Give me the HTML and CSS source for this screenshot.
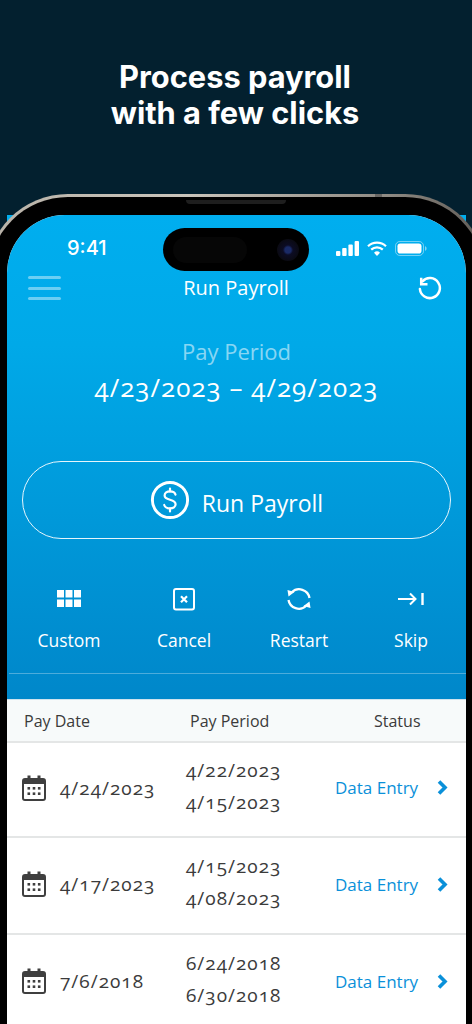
FILE: index.html
```html
<!DOCTYPE html>
<html lang="en">
<head>
<meta charset="utf-8">
<title>Run Payroll</title>
<link rel="stylesheet" href="styles.css">
</head>
<body>
<header class="hero">
  <h1>Process payroll<br>with a few clicks</h1>
</header>
<div class="phone">
  <span class="corner-bleed"></span>
  <div class="metal">
    <span class="band"></span>
    <div class="bezel">
      <span class="speaker"></span>
      <main class="screen">
        <div class="island"><span class="island-blob"></span><span class="lens"></span></div>
        <section class="top">
          <div class="status">
            <span class="time">9:41</span>
            <span class="status-icons">
              <svg width="23" height="15" viewBox="0 0 23 15"><g fill="#fff"><rect x="0" y="10" width="4.4" height="5" rx="1"/><rect x="6.2" y="7" width="4.4" height="8" rx="1"/><rect x="12.4" y="3.5" width="4.4" height="11.5" rx="1"/><rect x="18.6" y="0" width="4.4" height="15" rx="1"/></g></svg>
              <svg width="20" height="15" viewBox="0 0 20 15"><g fill="none" stroke="#fff" stroke-width="2.2"><path d="M1 5.2a13 13 0 0 1 18 0"/><path d="M4.2 8.6a8.4 8.4 0 0 1 11.6 0"/></g><path d="M10 15l-3-3.3a4.3 4.3 0 0 1 6 0z" fill="#fff"/></svg>
              <svg width="32" height="15" viewBox="0 0 32 15"><rect x=".5" y=".5" width="28" height="14" rx="4.4" fill="none" stroke="#fff" stroke-opacity=".45"/><rect x="2.5" y="2.5" width="24" height="10" rx="2.8" fill="#fff"/><path d="M30 5.2c1 .3 1.6 1.2 1.6 2.3S31 9.500 30 9.800z" fill="#fff" fill-opacity=".5"/></svg>
            </span>
          </div>
          <nav class="navbar">
            <span class="burger"><i></i><i></i><i></i></span>
            <span class="nav-title">Run Payroll</span>
            <svg class="reset" width="25" height="24" viewBox="0 0 25 24" fill="none" stroke="#fff" stroke-width="2.5"><path d="M5.500 5.300A10 10 0 1 1 2.900 13" stroke-linecap="round"/><path d="M4.200 1.800v6.500h6.300"/></svg>
          </nav>
          <div class="period">
            <div class="period-label">Pay Period</div>
            <div class="period-dates">4/23/2023 – 4/29/2023</div>
          </div>
          <button class="run">
            <svg width="40" height="40" viewBox="0 0 40 40" fill="none" stroke="#fff"><circle cx="20" cy="20" r="17.600" stroke-width="3"/><path d="M25.500 14.600c-.6-2-2.800-3.200-5.500-3.200-3 0-5.400 1.600-5.400 4.100 0 5.600 11 2.900 11 8.800 0 2.500-2.400 4.100-5.600 4.100-2.900 0-5.100-1.300-5.800-3.400" stroke-width="2.200" stroke-linecap="round"/><path d="M20 8.500v3M20 28.500v3" stroke-width="2.200" stroke-linecap="round"/></svg>
            <span>Run Payroll</span>
          </button>
          <div class="actions">
            <div class="action">
              <svg width="26" height="26" viewBox="0 0 26 26" fill="#fff"><rect x="1" y="4" width="7" height="7.500"/><rect x="9.500" y="4" width="7" height="7.500"/><rect x="18" y="4" width="7" height="7.500"/><rect x="1" y="13.500" width="7" height="7.500"/><rect x="9.500" y="13.500" width="7" height="7.500"/><rect x="18" y="13.500" width="7" height="7.500"/></svg>
              <span>Custom</span>
            </div>
            <div class="action">
              <svg width="26" height="26" viewBox="0 0 26 26" fill="none" stroke="#fff"><rect x="3" y="3" width="20" height="20.500" rx="2" stroke-width="2"/><path d="M10 10.200l6 6M16 10.200l-6 6" stroke-width="2.200"/></svg>
              <span>Cancel</span>
            </div>
            <div class="action">
              <svg width="26" height="26" viewBox="0 0 26 26" fill="none" stroke="#fff" stroke-width="2.300"><path d="M5.800 6.300A10.500 10.500 0 0 1 23.500 12"/><path d="M20.200 19.700A10.500 10.500 0 0 1 2.500 14"/><path d="M1.500 4l7 2-6 4.500z" fill="#fff" stroke="none"/><path d="M24.500 22l-7-2 6-4.500z" fill="#fff" stroke="none"/></svg>
              <span>Restart</span>
            </div>
            <div class="action">
              <svg width="26" height="26" viewBox="0 0 26 26" fill="none" stroke="#fff" stroke-width="2"><path d="M0 13h17M12 7.500l5.500 5.500-5.500 5.500"/><path d="M24.500 7v12" stroke-width="2.400"/></svg>
              <span>Skip</span>
            </div>
          </div>
          <hr class="divider">
        </section>
        <section class="table">
          <div class="thead">
            <span>Pay Date</span><span>Pay Period</span><span>Status</span>
          </div>
          <div class="row">
            <div class="date"><svg class="cal" width="24" height="26" viewBox="0 0 24 26"><use href="#cal"/></svg><span>4/24/2023</span></div>
            <div class="dates"><span>4/22/2023</span><span>4/15/2023</span></div>
            <div class="state"><span>Data Entry</span><svg width="11" height="15" viewBox="0 0 11 15" fill="none" stroke="#0a90d9" stroke-width="3.600"><path d="M2 1.500l6 6-6 6"/></svg></div>
          </div>
          <div class="row">
            <div class="date"><svg class="cal" width="24" height="26" viewBox="0 0 24 26"><use href="#cal"/></svg><span>4/17/2023</span></div>
            <div class="dates"><span>4/15/2023</span><span>4/08/2023</span></div>
            <div class="state"><span>Data Entry</span><svg width="11" height="15" viewBox="0 0 11 15" fill="none" stroke="#0a90d9" stroke-width="3.600"><path d="M2 1.500l6 6-6 6"/></svg></div>
          </div>
          <div class="row">
            <div class="date"><svg class="cal" width="24" height="26" viewBox="0 0 24 26"><use href="#cal"/></svg><span>7/6/2018</span></div>
            <div class="dates"><span>6/24/2018</span><span>6/30/2018</span></div>
            <div class="state"><span>Data Entry</span><svg width="11" height="15" viewBox="0 0 11 15" fill="none" stroke="#0a90d9" stroke-width="3.600"><path d="M2 1.500l6 6-6 6"/></svg></div>
          </div>
        </section>
      </main>
    </div>
  </div>
</div>
<svg class="defs" width="0" height="0">
  <symbol id="cal" viewBox="0 0 24 26">
    <path fill="#3f3f3f" fill-rule="evenodd" d="M3 3h2.500V.5h3V3h7V.5h3V3H21a3 3 0 0 1 3 3v17a3 3 0 0 1-3 3H3a3 3 0 0 1-3-3V6a3 3 0 0 1 3-3zM2 9v14c0 .6.400 1 1 1h18c.6 0 1-.4 1-1V9z"/>
    <g fill="#3f3f3f"><rect x="5.500" y="12" width="2.600" height="2.600"/><rect x="10.700" y="12" width="2.600" height="2.600"/><rect x="15.900" y="12" width="2.600" height="2.600"/><rect x="5.500" y="17.400" width="2.600" height="2.600"/><rect x="10.700" y="17.400" width="2.600" height="2.600"/><rect x="15.900" y="17.400" width="2.600" height="2.600"/></g>
  </symbol>
</svg>
</body>
</html>
```
FILE: styles.css
```css
* { box-sizing: border-box; }
html, body { margin: 0; padding: 0; }
body {
  width: 472px;
  height: 1024px;
  overflow: hidden;
  background: #03202f;
  font-family: "Open Sans", "Liberation Sans", sans-serif;
}
.defs { position: absolute; }
.hero {
  height: 194px;
  padding: 59px 2px 0 0;
  text-align: center;
}
.hero h1 {
  margin: 0;
  color: #fff;
  font: 700 30.800px/36px Inter, "Liberation Sans", sans-serif;
}
.phone {
  position: relative;
  width: 501px;
  margin-left: -14px;
}
.corner-bleed {
  position: absolute;
  z-index: -1;
  left: 21px;
  right: 21px;
  top: 21px;
  height: 8px;
  background: #00aeef;
}
.metal {
  position: relative;
  padding: 3px 3px 0;
  border-radius: 82px 82px 0 0;
  background: linear-gradient(90deg, #b8b2a8 0, #c9c4bb 40%, #8f8a83 80%, #5d5954 100%);
}
.band {
  position: absolute;
  left: 389px;
  top: 0;
  width: 7px;
  height: 3px;
  background: #6a6764;
}
.bezel {
  position: relative;
  padding: 18px 18px 0;
  border-radius: 79px 79px 0 0;
  background: #000;
}
.speaker {
  position: absolute;
  left: 197px;
  top: 3px;
  width: 100px;
  height: 4px;
  border-radius: 0 0 4px 4px;
  background: #1e1e1e;
}
.screen {
  position: relative;
  height: 820px;
  overflow: hidden;
  border-radius: 58px 58px 0 0;
  background: #fff;
}
.island {
  position: absolute;
  left: 156px;
  top: 13px;
  width: 146px;
  height: 43px;
  border-radius: 22px;
  background: #000;
  display: flex;
  align-items: center;
  justify-content: space-between;
  padding: 0 10px;
}
.island-blob { width: 74px; height: 26px; border-radius: 13px; background: #060606; }
.lens {
  width: 22px;
  height: 22px;
  border-radius: 50%;
  background: radial-gradient(circle, #1a2a66 0 3px, #0c0c24 5px, #0a0a12 11px);
}
.top {
  height: 484px;
  color: #fff;
  background: linear-gradient(#00aeef 0, #00a9e8 130px, #0087ca 100%);
}
.status {
  display: flex;
  justify-content: space-between;
  align-items: center;
  height: 45px;
  padding: 21px 39px 0 60px;
}
.time { font: 500 20px/24px Inter, sans-serif; }
.status-icons { display: flex; align-items: center; gap: 8px; }
.status-icons svg { display: block; }
.navbar {
  position: relative;
  display: flex;
  align-items: center;
  justify-content: space-between;
  height: 44px;
  padding: 12px 24px 0 21px;
}
.burger { display: flex; flex-direction: column; gap: 7.500px; width: 33px; }
.burger i { display: block; height: 3px; border-radius: 2px; background: rgba(255,255,255,.42); }
.nav-title { font-size: 20px; line-height: 24px; margin-right: 6px; }
.reset { display: block; }
.period {
  margin-top: 33px;
  text-align: center;
}
.period-label { font-size: 22px; line-height: 28px; color: rgba(255,255,255,.55); }
.period-dates {
  margin-top: 6px;
  font-size: 26px;
  font-weight: 500;
  line-height: 32px;
  letter-spacing: 1px;
  font-variant-numeric: oldstyle-nums;
}
.run {
  display: flex;
  align-items: center;
  justify-content: center;
  gap: 12px;
  width: 429px;
  height: 78px;
  margin: 58px 0 0 15px;
  padding: 0;
  border: 1.500px solid rgba(255,255,255,.9);
  border-radius: 39px;
  background: transparent;
  color: #fff;
  font-family: inherit;
  font-size: 23px;
}
.run svg { display: block; }
.run span { padding-top: 6px; }
.actions {
  display: grid;
  grid-template-columns: 114px 116px 114px 110px;
  margin: 47px 0 0 5px;
}
.action {
  display: flex;
  flex-direction: column;
  align-items: center;
  font-size: 17.500px;
  line-height: 22px;
}
.action svg { display: block; margin-bottom: 17px; }
.divider {
  height: 1px;
  margin: 22px 0 0 2px;
  border: 0;
  background: rgba(255,255,255,.3);
}
.table { background: #fff; color: #3b3b3b; }
.thead {
  display: grid;
  grid-template-columns: 166px 184px auto;
  align-items: center;
  height: 44px;
  padding: 1px 0 0 17px;
  background: #f7fafa;
  border-top: 1px solid #cfe3ee;
  border-bottom: 2px solid #e4e6e6;
  font-size: 16px;
}
.row {
  display: grid;
  grid-template-columns: 164px 149px auto;
  align-items: center;
  height: 97px;
  padding: 0 0 3px 15px;
  border-bottom: 2px solid #e4e6e6;
}
.thead + .row { height: 95px; padding-bottom: 4px; }
.date { display: flex; align-items: center; gap: 14px; }
.date svg { display: block; }
.date span, .dates span {
  font-size: 19px;
  font-weight: 500;
  letter-spacing: 1px;
  font-variant-numeric: oldstyle-nums;
}
.dates { display: flex; flex-direction: column; gap: 6px; line-height: 26px; margin-top: -4px; }
.state {
  display: flex;
  align-items: center;
  gap: 19px;
  color: #0a90d9;
  font-size: 17px;
}
.state svg { display: block; }
```
